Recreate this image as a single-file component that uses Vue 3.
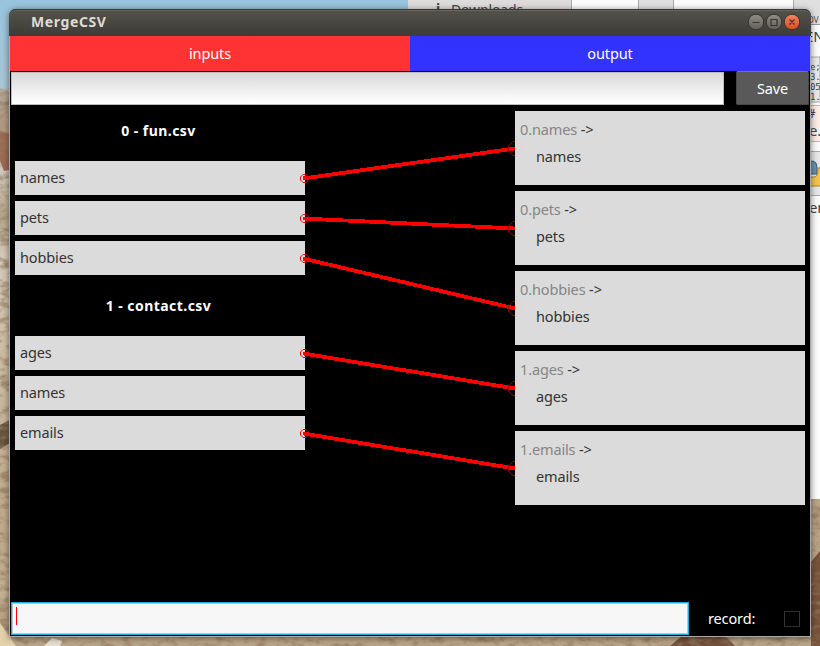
<script setup>
const groups = [
  { title: '0 - fun.csv', fields: ['names', 'pets', 'hobbies'] },
  { title: '1 - contact.csv', fields: ['ages', 'names', 'emails'] },
]
const outputs = [
  { source: '0.names', name: 'names' },
  { source: '0.pets', name: 'pets' },
  { source: '0.hobbies', name: 'hobbies' },
  { source: '1.ages', name: 'ages' },
  { source: '1.emails', name: 'emails' },
]
const links = [
  { from: 178.5, to: 148.5 },
  { from: 218.5, to: 228.5 },
  { from: 258.5, to: 308.5 },
  { from: 353.5, to: 388.5 },
  { from: 433.5, to: 468.5 },
]
</script>

<template>
  <div class="desktop">
    <svg class="wallpaper" width="820" height="646" viewBox="0 0 820 646">
      <defs>
        <linearGradient id="sky" x1="0" y1="0" x2="0" y2="1">
          <stop offset="0" stop-color="#98c4de" /><stop offset="1" stop-color="#a9c6d4" />
        </linearGradient>
        <linearGradient id="cliff" x1="0" y1="0" x2="0" y2="1">
          <stop offset="0" stop-color="#b5a898" /><stop offset=".07" stop-color="#b09882" />
          <stop offset=".15" stop-color="#d3c9bc" /><stop offset=".23" stop-color="#b5a48c" />
          <stop offset=".3" stop-color="#d5cabb" /><stop offset=".5" stop-color="#cbbba2" />
          <stop offset=".8" stop-color="#bda98d" /><stop offset="1" stop-color="#c8b798" />
        </linearGradient>
        <filter id="grain" x="0" y="0" width="100%" height="100%">
          <feTurbulence type="fractalNoise" baseFrequency=".09 .16" numOctaves="4" seed="8" />
          <feColorMatrix values="0 0 0 0 .3  0 0 0 0 .2  0 0 0 0 .12  2.2 0 0 0 -1" result="noise" />
          <feComposite in="noise" in2="SourceGraphic" operator="in" />
        </filter>
      </defs>
      <rect width="820" height="90" fill="url(#sky)" />
      <path d="M0 88L10 91V646H0Z" fill="url(#cliff)" />
      <path d="M0 131L10 134V170L4 171L0 161Z" fill="#9b6b55" />
      <path d="M0 425L10 420V443L0 449Z" fill="#655440" />
      <path d="M0 600H10V636H811V499H820V646H0Z" fill="#b8a487" />
      <path d="M811 562L820 551V646H811Z" fill="#76523a" />
      <path d="M670 646L682 636H725L735 646Z" fill="#74503a" />
      <path d="M0 88H10V636H811V499H820V646H0Z" filter="url(#grain)" />
      <path d="M0 623L16 646H0Z" fill="#e2d1aa" />
      <path d="M44 646L52 638L62 641L60 646Z" fill="#e5ddce" />

      <path d="M408 0H571V10H408Z" fill="#dddcda" />
      <path d="M571 0H820V499H571Z" fill="#fbfbfb" />
      <path d="M571.5 0V9M638.5 0V9M673.5 0V9M793.5 0V9" stroke="#aaa" />
      <path d="M639 0H673V9H639ZM794 0H820V24H794Z" fill="#dfdfdf" />
      <path d="M810 24.5H820" stroke="#999" />
      <g class="back-text">
        <text x="436" y="14" font-size="14" font-weight="700">i</text>
        <text x="451" y="14.5" font-size="14" textLength="72">Downloads</text>
        <text x="808" y="23" font-size="8">DV</text>
        <text x="805" y="42" font-size="15">EN</text>
        <path d="M810 57H820V102H810Z" fill="#e8e8e8" stroke="#aaa" />
        <text class="mono" x="810" y="70" font-size="9">e;</text>
        <text class="mono" x="810" y="80" font-size="9">3.</text>
        <text class="mono" x="810" y="90" font-size="9">05</text>
        <text class="mono" x="810" y="100" font-size="9">1.</text>
        <path d="M809 105.500H821V141.500H809Z" fill="#fdebe6" stroke="#f0a58e" />
        <text class="mono" x="808" y="118" font-size="12">#</text>
        <text x="809" y="136" font-size="15">e.</text>
        <path d="M809 151.500H821V195.500H809Z" fill="#e6e6e6" stroke="#aaa" />
        <path d="M807 167Q807 161 813 161Q817 162 817 167V174H807Z" fill="#6791ad" stroke="#355f7b" />
        <path d="M808 177H815Q818 176 818 168H821V186H808Z" fill="#f1c54b" stroke="#a8842c" />
        <text x="809" y="213" font-size="15">en</text>
      </g>
    </svg>

    <main class="window">
      <header class="titlebar">
        <span class="caption">MergeCSV</span>
        <svg class="controls" width="54" height="18" viewBox="0 0 54 18">
          <defs>
            <linearGradient id="button" x1="0" y1="0" x2="0" y2="1"><stop stop-color="#908e84" /><stop offset="1" stop-color="#605e57" /></linearGradient>
            <linearGradient id="close" x1="0" y1="0" x2="0" y2="1"><stop stop-color="#f58464" /><stop offset="1" stop-color="#dd4a20" /></linearGradient>
          </defs>
          <circle cx="9" cy="9" r="7.800" fill="url(#button)" stroke="#34332e" />
          <circle cx="27" cy="9" r="7.800" fill="url(#button)" stroke="#34332e" />
          <circle cx="45" cy="9" r="7.800" fill="url(#close)" stroke="#34332e" />
          <path d="M5.500 9.500H12.500M24 6.500H30V12.500H24ZM42.500 6.500L47.500 11.500M47.500 6.500L42.500 11.500" fill="none" stroke="#35342f" stroke-width="1.200" />
        </svg>
      </header>

      <nav class="tabs">
        <div class="tab inputs">inputs</div>
        <div class="tab output">output</div>
      </nav>

      <div class="toolbar">
        <div class="path-field"></div>
        <button class="save">Save</button>
      </div>

      <section class="workspace">
        <div class="sources">
          <section v-for="group in groups" :key="group.title" class="group">
            <h2>{{ group.title }}</h2>
            <div v-for="field in group.fields" :key="field" class="field">{{ field }}</div>
          </section>
        </div>
        <div class="targets">
          <div v-for="item in outputs" :key="item.source" class="card">
            <div><span class="muted">{{ item.source }}</span> -&gt;</div>
            <div class="target-name">{{ item.name }}</div>
          </div>
        </div>
      </section>

      <footer class="footer">
        <div class="command"><span class="caret"></span></div>
        <span class="record">record:</span>
        <span class="check"></span>
      </footer>
    </main>

    <svg class="links" width="820" height="646" viewBox="0 0 820 646">
      <g v-for="link in links" :key="link.from" fill="none">
        <path :d="`M303 ${link.from}L515 ${link.to}`" stroke="#f00" stroke-width="3.800" shape-rendering="crispEdges" />
        <path :d="`M303 ${link.from - 4}h3l2.500 2.500v3l-2.500 2.500h-3l-2.500-2.500v-3z`" stroke="#e00" />
        <path :d="`M515 ${link.to - 7}h-2l-4.500 4.500v5l4.500 4.500h2`" stroke="#a00000" />
        <path :d="`M515 ${link.to - 7}h2l4.500 4.500v5l-4.500 4.500h-2`" stroke="#ffc9c9" />
        <path :d="`M515 ${link.to}h1.500`" stroke="#ffc9c9" stroke-width="3" />
      </g>
    </svg>
  </div>
</template>

<style>
body { overflow: hidden; }
</style>

<style scoped>
* { box-sizing: border-box; }
.desktop { position: relative; width: 820px; height: 646px; padding: 9px; overflow: hidden; font: 14.5px/20px "Noto Sans", sans-serif; letter-spacing: -.13px; }
.wallpaper, .links { position: absolute; top: 0; left: 0; }
.links { pointer-events: none; }
.back-text { fill: #444; font-family: "Noto Sans", sans-serif; }
.mono { font-family: "DejaVu Sans Mono", monospace; }
.window { position: relative; display: flex; flex-direction: column; width: 802px; height: 628px; background: #000; border: 1px solid #aaa; border-top: 0; border-radius: 7px 7px 0 0; box-shadow: 0 1px 6px rgba(0,0,0,.5); }
.titlebar { height: 27px; margin: 0 -1px; padding: 0 10px 1px 22px; display: flex; align-items: center; justify-content: space-between; border-radius: 7px 7px 0 0; background: linear-gradient(#54534b, #3c3b37); box-shadow: inset 0 1px #393733, inset 0 2px #68665e; }
.caption { color: #dfdbd2; font: bold 14px/24px "Noto Sans", sans-serif; letter-spacing: .6px; }
.tabs { display: flex; height: 35px; flex: none; }
.tab { width: 400px; color: #fff; line-height: 34px; text-align: center; }
.inputs { background: #f33; }
.output { background: #33f; }
.toolbar { display: flex; justify-content: space-between; height: 35px; padding: 0 1px; }
.path-field { width: 713px; height: 33px; margin-top: 1px; border: 1px solid #bdbdbd; background: linear-gradient(#d9d9d9, #fff); }
.save { width: 73px; height: 34px; padding: 0; color: #fff; font: inherit; letter-spacing: inherit; background: #595959; border: 1px solid #484848; border-top-color: #777; border-radius: 2px; }
.workspace { display: flex; justify-content: space-between; height: 495px; padding: 5px; }
.sources { width: 290px; display: flex; flex-direction: column; }
.group { margin-bottom: 15px; }
h2 { height: 50px; margin: 0; padding: 10px 3px 0 0; color: #fff; font: bold 14px/20px "Noto Sans", sans-serif; letter-spacing: .45px; text-align: center; }
.group + .group h2 { height: 40px; padding-top: 0; }
.field { height: 34px; margin-bottom: 6px; padding-left: 5px; background: #dbdbdb; color: #333; line-height: 32px; }
.targets { width: 290px; display: flex; flex-direction: column; gap: 6px; }
.card { height: 74px; padding: 8px 5px; background: #dbdbdb; color: #333; }
.card > div { height: 27px; }
.card .target-name { padding-left: 16px; }
.muted { color: #858585; }
.footer { display: flex; align-items: center; height: 35px; padding: 0 10px 0 1px; }
.command { width: 678px; height: 33px; padding: 4px; border: 1px solid #24a8df; background: #f7f7f7; box-shadow: inset 0 0 0 1px #a9cbdc; }
.caret { display: block; width: 1px; height: 18px; background: red; }
.record { margin: 0 0 2px 19px; color: #fff; }
.check { width: 16px; height: 16px; margin-left: auto; border: 1px solid #333; }
</style>
